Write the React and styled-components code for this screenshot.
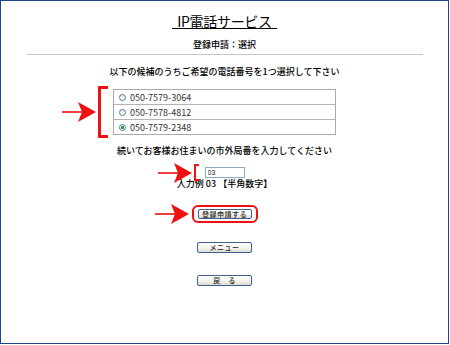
import React, { useState } from "react";
import styled, { createGlobalStyle } from "styled-components";

const GlobalStyle = createGlobalStyle`
  body {
    margin: 0;
    background: #fff;
    font-family: "Noto Sans CJK JP", "Noto Sans", sans-serif;
    color: #000;
  }
`;

// 外枠
const Frame = styled.div`
  box-sizing: border-box;
  width: 449px;
  height: 344px;
  border: 1px solid #22418e;
  display: flex;
  flex-direction: column;
  align-items: center;
`;

const TitleRow = styled.div`
  display: flex;
  margin-top: 14px;
`;

const Title = styled.span`
  display: block;
  font-size: 14px;
  line-height: 13px;
  letter-spacing: -0.3px;
  padding: 0 5px;
  border-bottom: 1px solid #000;
`;

const Line = styled.div`
  font-size: 9px;
  line-height: 12px;
  font-weight: 500;
  margin-top: ${(p) => p.$top || 0}px;
  white-space: nowrap;
`;

const Rule = styled.div`
  width: 396px;
  height: 1px;
  background: #c6c6c6;
  margin-top: 3px;
`;

const Anchor = styled.div`
  position: relative;
  margin-top: ${(p) => p.$top || 0}px;
`;

const Bracket = styled.div`
  position: absolute;
  box-sizing: border-box;
  left: ${(p) => p.$left}px;
  top: ${(p) => p.$top}px;
  bottom: ${(p) => p.$top}px;
  width: ${(p) => p.$w}px;
  border: ${(p) => p.$t}px solid #ee1111;
  border-right: none;
`;

const ArrowBox = styled.svg`
  position: absolute;
  right: calc(100% + ${(p) => p.$gap}px);
  top: 50%;
  transform: translateY(-50%);
`;

const Arrow = ({ gap }) => (
  <ArrowBox $gap={gap} width="35" height="20" viewBox="0 0 35 20">
    <rect x="0" y="9.2" width="22" height="1.6" fill="#ee1111" />
    <path d="M16 0 L34 10 L16 20 L20 10 Z" fill="#ee1111" />
  </ArrowBox>
);

const Choices = styled.div`
  width: 221px;
  border: 1px solid #a9a9a9;
  display: flex;
  flex-direction: column;
`;

const Choice = styled.label`
  height: 14px;
  display: flex;
  align-items: center;
  gap: 4px;
  padding-left: 5px;
  font-size: 9px;
  color: #333;
  cursor: pointer;
  & + & {
    border-top: 1px solid #b3b3b3;
  }
`;

const Radio = styled.span`
  box-sizing: border-box;
  width: 7px;
  height: 7px;
  border-radius: 50%;
  border: 1px solid #4f78ad;
  background: ${(p) =>
    p.$checked
      ? "radial-gradient(circle, #23a323 0 1.4px, #fff 1.6px)"
      : "linear-gradient(#e6e6e0, #fff)"};
`;

const CodeInput = styled.input`
  box-sizing: border-box;
  display: block;
  width: 40px;
  height: 11px;
  padding: 0 2px;
  border: 1px solid #8fa8c6;
  font-size: 7px;
  font-family: "Liberation Sans", sans-serif;
  color: #222;
  outline: none;
`;

const Outline = styled.div`
  position: relative;
  margin-top: 15px;
  padding: 2px 4px;
  border: 2px solid #ee1111;
  border-radius: 6px;
`;

const Button = styled.button`
  box-sizing: border-box;
  display: block;
  width: ${(p) => p.$w || 55}px;
  height: ${(p) => p.$h || 11}px;
  margin-top: ${(p) => p.$top || 0}px;
  padding: 0;
  border: 1px solid #3e5f92;
  border-radius: 2px;
  background: linear-gradient(#ffffff, #f2f1ea 60%, #dedbd0);
  font-family: "Noto Sans CJK JP", sans-serif;
  font-size: 7px;
  font-weight: 500;
  line-height: 9px;
  color: #222;
  letter-spacing: 0.5px;
`;

const numbers = ["050-7579-3064", "050-7578-4812", "050-7579-2348"];

export default function App() {
  const [picked, setPicked] = useState(2);
  const [code, setCode] = useState("03");

  return (
    <>
      <GlobalStyle />
      <Frame>
        <TitleRow>
          <Title>IP電話サービス</Title>
        </TitleRow>
        <Line $top={10}>登録申請：選択</Line>
        <Rule />
        <Line $top={11}>以下の候補のうちご希望の電話番号を1つ選択して下さい</Line>

        <Anchor $top={11}>
          <Arrow gap={16} />
          <Bracket $left={-15} $top={-3} $w={10} $t={3} />
          <Choices>
            {numbers.map((n, i) => (
              <Choice key={n} onClick={() => setPicked(i)}>
                <Radio $checked={picked === i} />
                {n}
              </Choice>
            ))}
          </Choices>
        </Anchor>

        <Line $top={10}>続いてお客様お住まいの市外局番を入力してください</Line>

        <Anchor $top={10}>
          <Arrow gap={12} />
          <Bracket $left={-11} $top={-3} $w={5} $t={2} />
          <CodeInput value={code} onChange={(e) => setCode(e.target.value)} />
        </Anchor>
        <Line>入力例 03 【半角数字】</Line>

        <Outline>
          <Arrow gap={4} />
          <Button $w={54} $h={10}>登録申請する</Button>
        </Outline>

        <Button $top={19}>メニュー</Button>
        <Button $top={22}>戻　る</Button>
      </Frame>
    </>
  );
}
